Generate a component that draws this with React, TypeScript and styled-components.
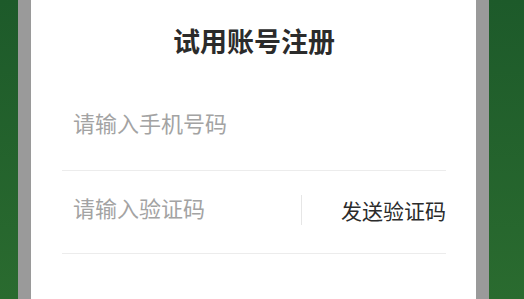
import React, { useState } from 'react';
import styled, { createGlobalStyle } from 'styled-components';

const GlobalStyle = createGlobalStyle`
  html, body {
    margin: 0;
    padding: 0;
  }
  body {
    font-family: "Noto Sans CJK SC", "Noto Sans", sans-serif;
  }
`;

const Page = styled.div`
  display: flex;
  height: 299px;
  width: 524px;
  overflow: hidden;
  background: linear-gradient(180deg, #1d5a2a 0%, #2a6b2f 100%);
`;

const Frame = styled.div`
  display: flex;
  margin-left: 18px;
  width: 471px;
  padding: 0 13px;
  box-sizing: border-box;
  background: #9a9a9a;
`;

const Card = styled.div`
  flex: 1;
  background: #ffffff;
  padding: 0 30px 0 31px;
  box-sizing: border-box;
`;

const Title = styled.h1`
  margin: 0;
  padding-top: 23px;
  font-size: 27px;
  line-height: 36px;
  font-weight: 700;
  color: #2b2b2b;
  text-align: center;
`;

const Form = styled.div`
  margin-top: 30px;
`;

const Row = styled.div`
  display: flex;
  align-items: center;
  height: 82px;
  padding-bottom: 10px;
  box-sizing: border-box;
  border-bottom: 1px solid #ececec;
  & + & {
    height: 83px;
    padding-bottom: 4px;
  }
`;

const Field = styled.input`
  flex: 1;
  min-width: 0;
  margin-bottom: 6px;
  border: none;
  outline: none;
  background: transparent;
  padding: 0 0 0 11px;
  font-family: inherit;
  font-size: 22px;
  color: #333;
  &::placeholder {
    color: #a3a3a3;
  }
`;

const Divider = styled.span`
  width: 1px;
  height: 30px;
  background: #e6e6e6;
`;

const SendButton = styled.button`
  border: none;
  background: transparent;
  padding: 0 0 0 39px;
  font-family: inherit;
  font-size: 21px;
  color: #2b2b2b;
  cursor: pointer;
`;

function App() {
  const [phone, setPhone] = useState('');
  const [code, setCode] = useState('');

  return (
    <Page>
      <GlobalStyle />
      <Frame>
        <Card>
          <Title>试用账号注册</Title>
          <Form>
            <Row>
              <Field
                placeholder="请输入手机号码"
                value={phone}
                onChange={e => setPhone(e.target.value)}
              />
            </Row>
            <Row>
              <Field
                placeholder="请输入验证码"
                value={code}
                onChange={e => setCode(e.target.value)}
              />
              <Divider />
              <SendButton>发送验证码</SendButton>
            </Row>
          </Form>
        </Card>
      </Frame>
    </Page>
  );
}

export default App;
